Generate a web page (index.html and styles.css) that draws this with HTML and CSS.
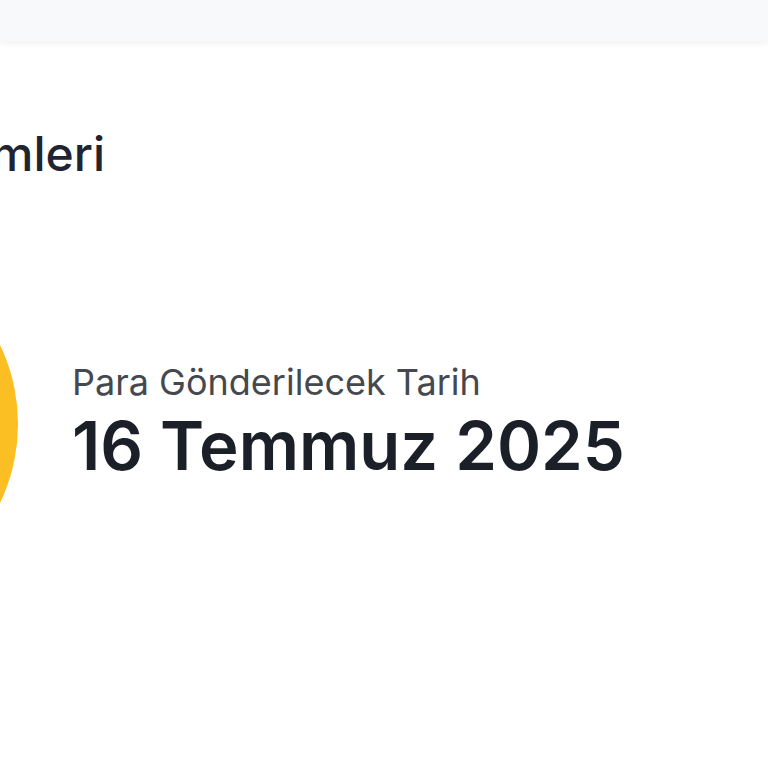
FILE: index.html
```html
<!DOCTYPE html>
<html lang="tr">
<head>
    <meta name="viewport" content="width=device-width, initial-scale=1">
    <title>Para Gönderim Bilgileri</title>
    <link rel="stylesheet" href="styles.css">
</head>
<body>
    <header class="topbar"></header>
    <main class="content">
        <h1 class="title">Ödeme İşlemleri</h1>
        <div class="date-card">
            <div class="date-icon"></div>
            <div class="date-info">
                <span class="date-label">Para Gönderilecek Tarih</span>
                <span class="date-value">16 Temmuz 2025</span>
            </div>
        </div>
    </main>
</body>
</html>
```

FILE: styles.css
```css
html, body {
    margin: 0;
    padding: 0;
    font-family: Inter, "Noto Sans", Arial, sans-serif;
    background-color: #fff;
    overflow: hidden;
}
.topbar {
    height: 41px;
    background-color: #f8f9fb;
    box-shadow: 0 3px 6px rgba(0, 0, 0, 0.05);
}
.content {
    padding-top: 84px;
    margin-left: -346px;
}
.title {
    margin: 0;
    font-size: 48px;
    font-weight: 500;
    line-height: 58px;
    color: #1f2430;
    text-align: right;
    width: 451px;
}
.date-card {
    display: flex;
    align-items: center;
    gap: 54px;
    margin-top: 59px;
}
.date-icon {
    width: 364px;
    height: 364px;
    border-radius: 50%;
    background-color: #fbbf24;
    flex-shrink: 0;
}
.date-info {
    display: flex;
    flex-direction: column;
}
.date-label {
    font-size: 36px;
    color: #45494f;
    line-height: 40px;
    margin-bottom: 4px;
}
.date-value {
    font-size: 67px;
    font-weight: 600;
    color: #1b1f27;
    line-height: 80px;
}
```
